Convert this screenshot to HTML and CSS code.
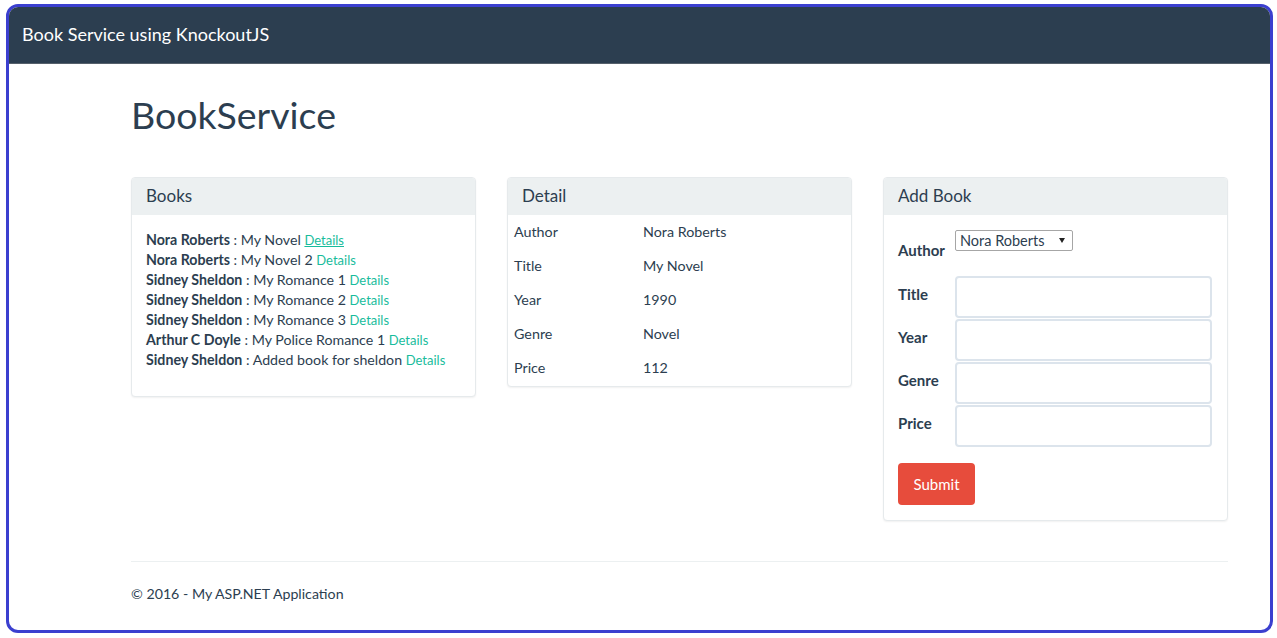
FILE: index.html
```html
<!DOCTYPE html>
<html>
<head>
<meta charset="utf-8">
<title>BookService</title>
<link rel="stylesheet" href="styles.css">
</head>
<body>
<div class="frame">
  <nav class="navbar"><span class="brand">Book Service using KnockoutJS</span></nav>
  <main class="container">
    <h1 class="page-title">BookService</h1>
    <div class="row">
      <section class="panel">
        <div class="panel-heading">Books</div>
        <div class="panel-body books">
          <div class="book"><b>Nora Roberts</b> : My Novel <a class="link hover">Details</a></div>
          <div class="book"><b>Nora Roberts</b> : My Novel 2 <a class="link">Details</a></div>
          <div class="book"><b>Sidney Sheldon</b> : My Romance 1 <a class="link">Details</a></div>
          <div class="book"><b>Sidney Sheldon</b> : My Romance 2 <a class="link">Details</a></div>
          <div class="book"><b>Sidney Sheldon</b> : My Romance 3 <a class="link">Details</a></div>
          <div class="book"><b>Arthur C Doyle</b> : My Police Romance 1 <a class="link">Details</a></div>
          <div class="book"><b>Sidney Sheldon</b> : Added book for sheldon <a class="link">Details</a></div>
        </div>
      </section>
      <section class="panel">
        <div class="panel-heading">Detail</div>
        <table class="detail">
          <tr><td class="key">Author</td><td>Nora Roberts</td></tr>
          <tr><td class="key">Title</td><td>My Novel</td></tr>
          <tr><td class="key">Year</td><td>1990</td></tr>
          <tr><td class="key">Genre</td><td>Novel</td></tr>
          <tr><td class="key">Price</td><td>112</td></tr>
        </table>
      </section>
      <section class="panel">
        <div class="panel-heading">Add Book</div>
        <div class="panel-body form">
          <div class="form-row author-row">
            <label class="control-label">Author</label>
            <div class="select"><span>Nora Roberts</span><span class="caret"></span></div>
          </div>
          <div class="form-row">
            <label class="control-label">Title</label>
            <input class="form-control" type="text">
          </div>
          <div class="form-row">
            <label class="control-label">Year</label>
            <input class="form-control" type="text">
          </div>
          <div class="form-row">
            <label class="control-label">Genre</label>
            <input class="form-control" type="text">
          </div>
          <div class="form-row">
            <label class="control-label">Price</label>
            <input class="form-control" type="text">
          </div>
          <button class="btn" type="button">Submit</button>
        </div>
      </section>
    </div>
    <hr class="divider">
    <footer class="footer">© 2016 - My ASP.NET Application</footer>
  </main>
</div>
</body>
</html>
```

FILE: styles.css
```css
* { box-sizing: border-box; }
html, body { margin: 0; padding: 0; background: #fff; }
body {
  font-family: Lato, "Open Sans", sans-serif;
  color: #2c3e50;
  font-size: 14px;
  line-height: 20px;
}
.frame {
  margin: 4px 0 0 6px;
  width: 1267px;
  height: 629px;
  border: 3px solid #3b3fcf;
  border-radius: 12px;
  overflow: hidden;
  background: #fff;
}
.navbar {
  height: 57px;
  background: #2c3e50;
  border-bottom: 1px solid #56606b;
  padding: 17px 13px 0;
}
.brand {
  color: #fff;
  font-size: 18px;
  line-height: 20px;
  display: block;
}
.container {
  margin-left: 122px;
  width: 1097px;
}
.page-title {
  margin: 31px 0 42px;
  font-size: 37.5px;
  line-height: 40px;
  font-weight: 400;
  color: #2c3e50;
}
.row {
  display: flex;
  gap: 31px;
  align-items: flex-start;
}
.panel {
  width: 345px;
  border: 1px solid #e6eaec;
  border-radius: 4px;
  box-shadow: 0 1px 2px rgba(0,0,0,0.06);
  background: #fff;
  overflow: hidden;
}
.panel-heading {
  background: #ecf0f1;
  padding: 9px 14px;
  font-size: 17px;
  line-height: 18px;
  border-bottom: 1px solid #ecf0f1;
}
.panel-body { padding: 15px 14px; }
.books { padding-bottom: 26px; font-size: 14.2px; }
.book b { font-weight: 700; }
.link {
  color: #18bc9c;
  font-size: 13px;
  cursor: pointer;
}
.link.hover { text-decoration: underline; }
.detail {
  width: 100%;
  border-collapse: collapse;
  font-size: 14.3px;
  margin-bottom: 1px;
}
.detail td {
  padding: 7px 6px;
  line-height: 20px;
  vertical-align: top;
}
.detail td.key { width: 129px; }
.form { padding: 15px 15px 15px 14px; }
.form-row {
  display: flex;
  align-items: flex-start;
  margin-bottom: 1px;
}
.control-label {
  width: 57px;
  flex: none;
  font-weight: 700;
  font-size: 15px;
  line-height: 20px;
  padding-top: 8px;
}
.author-row { margin-bottom: 16px; height: 30px; }
.author-row .control-label { padding-top: 10px; }
.select {
  width: 118px;
  height: 21px;
  border: 1px solid #a6a6a6;
  border-radius: 2px;
  padding: 0 0 0 4px;
  font-size: 14.5px;
  line-height: 18px;
  display: flex;
  align-items: center;
  justify-content: space-between;
}
.caret {
  width: 0;
  height: 0;
  border-left: 3px solid transparent;
  border-right: 3px solid transparent;
  border-top: 5px solid #222;
  margin-right: 7px;
}
.form-control {
  width: 257px;
  height: 42px;
  border: 2px solid #dce4ec;
  border-radius: 4px;
  padding: 8px 14px;
  font: inherit;
  color: #2c3e50;
  outline: none;
  background: #fff;
  margin: 0;
}
.btn {
  margin-top: 16px;
  display: block;
  width: 77px;
  height: 42px;
  border: none;
  border-radius: 4px;
  background: #e74c3c;
  color: #fff;
  font-family: Lato, "Open Sans", sans-serif;
  font-size: 15px;
  padding: 0;
}
.divider {
  margin: 40px 0 0;
  border: 0;
  border-top: 1px solid #ecf0f1;
}
.footer {
  margin-top: 21px;
  font-size: 14.2px;
  line-height: 21px;
}
```
